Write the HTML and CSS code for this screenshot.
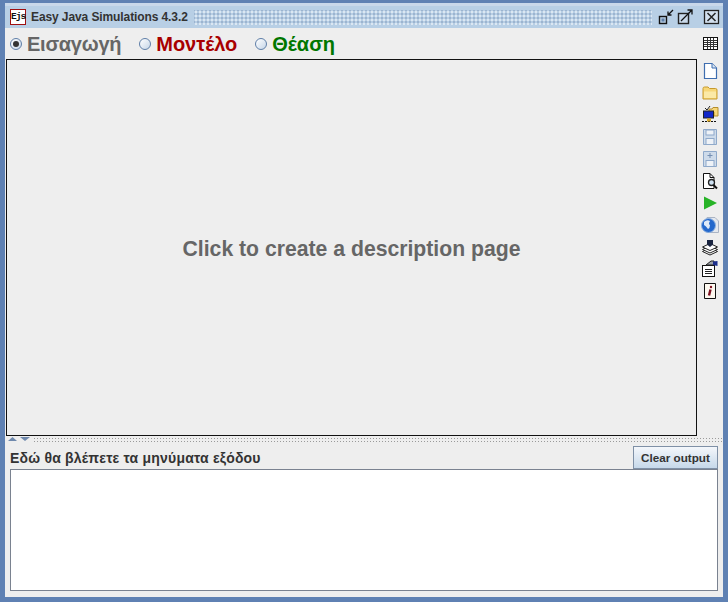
FILE: index.html
```html
<!DOCTYPE html>
<html lang="el">
<head>
<meta charset="utf-8">
<title>Easy Java Simulations</title>
<link rel="stylesheet" href="styles.css">
</head>
<body>
<div class="frame">
  <header class="titlebar">
    <span class="logo">Ejs</span>
    <span class="title">Easy Java Simulations 4.3.2</span>
    <span class="dots"></span>
    <span class="winbtn"><svg width="18" height="18" viewBox="0 0 18 18"><rect x="1.500" y="8.500" width="7" height="7" fill="#b8cfe5" stroke="#111" stroke-width="1.400"/><rect x="3.500" y="10.500" width="3" height="3" fill="#5f7fa8"/><path d="M15 2L10 7M10 3.500V7H13.500" fill="none" stroke="#111" stroke-width="1.300"/></svg></span>
    <span class="winbtn flush"><svg width="18" height="18" viewBox="0 0 18 18"><rect x="2.500" y="5.500" width="10" height="10" fill="#c9d9ea" stroke="#222" stroke-width="1.400"/><path d="M5 13L16 2M11.500 2H16V6.500" fill="none" stroke="#111" stroke-width="1.300"/></svg></span>
    <span class="winbtn close"><svg width="18" height="18" viewBox="0 0 18 18"><rect x="1.500" y="2.500" width="14" height="13" fill="#d3e0ee" stroke="#222" stroke-width="1.300"/><path d="M4.500 5L12.500 13M12.500 5L4.500 13" stroke="#222" stroke-width="1.500"/></svg></span>
  </header>
  <div class="tabs">
    <label class="tab grey"><span class="radio on"></span><span class="tight">Εισαγωγή</span></label>
    <label class="tab red"><span class="radio"></span>Μοντέλο</label>
    <label class="tab green"><span class="radio"></span>Θέαση</label>
    <svg class="grid-icon" width="15" height="13" viewBox="0 0 15 13"><rect x=".5" y=".5" width="14" height="12" fill="#fff" stroke="#111"/><path d="M1 3.500H14M1 5.500H14M1 7.500H14M1 9.500H14M4.500 1V12M7.500 1V12M10.500 1V12" stroke="#333"/></svg>
  </div>
  <div class="workspace">
    <main class="page">Click to create a description page</main>
    <nav class="tools">
      <svg width="16" height="18" viewBox="0 0 16 18"><path d="M2.500 1.500H10L14.500 6V16.500H2.500Z" fill="#fff" stroke="#3f6eb0" stroke-width="1.200"/><path d="M10 1.500V6H14.500" fill="#dbe6f3" stroke="#3f6eb0"/></svg>
      <svg width="16" height="18" viewBox="0 0 16 18"><path d="M1 4.500Q1 3 2.500 3H6L7.500 4.500H13.500Q15 4.500 15 6V15H1Z" fill="#f7d778" stroke="#c79a2c"/><path d="M2 7.500H14V14H2Z" fill="#fbe9a6"/></svg>
      <svg width="18" height="18" viewBox="0 0 18 18"><path d="M8 3H11L12 1.500H17V10H13V6H8Z" fill="#f7d778" stroke="#b58e2c"/><path d="M4 2L6 4L9 0" fill="none" stroke="#222"/><rect x="2.500" y="5" width="10" height="7" fill="#1226c8" stroke="#222"/><path d="M1 15.500H16" stroke="#111" stroke-dasharray="2 1"/><rect x="6" y="12.500" width="4" height="3" fill="#d8a828"/></svg>
      <svg class="faded" width="16" height="18" viewBox="0 0 16 18"><path d="M1.500 1.500H14.500V16.500H1.500Z" fill="#c9d8ea" stroke="#7f9dc4"/><rect x="4" y="2" width="8" height="5" fill="#eef3f9" stroke="#7f9dc4"/><rect x="4" y="10.500" width="8" height="6" fill="#eef3f9" stroke="#7f9dc4"/></svg>
      <svg class="faded" width="16" height="18" viewBox="0 0 16 18"><path d="M1.500 1.500H14.500V16.500H1.500Z" fill="#c9d8ea" stroke="#7f9dc4"/><path d="M8 3V8M5.500 5.500H10.500" stroke="#5f7fa8"/><rect x="4" y="10.500" width="8" height="6" fill="#eef3f9" stroke="#7f9dc4"/></svg>
      <svg width="18" height="18" viewBox="0 0 18 18"><path d="M2.500 1.500H9L13 5.500V16.500H2.500Z" fill="#fff" stroke="#111"/><path d="M9 1.500V5.500H13" fill="none" stroke="#111"/><circle cx="10.500" cy="10.500" r="3" fill="#cfe2f3" stroke="#222" stroke-width="1.300"/><path d="M12.500 13L16 16.500" stroke="#111" stroke-width="2"/></svg>
      <svg width="16" height="18" viewBox="0 0 16 18"><path d="M2 2.500L15 9L2 15.500Z" fill="#27b327"/></svg>
      <svg width="20" height="18" viewBox="0 0 20 18"><path d="M7 1.500H15L18.500 5V16.500H7Z" fill="#e4e8ee" stroke="#aab4c4"/><circle cx="8.500" cy="9.500" r="7" fill="#2468cc" stroke="#8fb2e0"/><path d="M4 6Q7 3 10 5Q8 8 10 9Q10 12 8 13Q6 10 4 9Z" fill="#dfeaf8"/></svg>
      <svg width="18" height="18" viewBox="0 0 18 18"><path d="M1.500 13.500L9 17L16.500 13.500L9 10Z" fill="#fff" stroke="#222"/><path d="M1.500 11.500L9 15L16.500 11.500L9 8Z" fill="#fff" stroke="#222"/><path d="M1.500 9L9 12.500L16.500 9L9 5.500Z" fill="#fff" stroke="#222"/><path d="M6 2H12V6.500L9 9L6 6.500Z" fill="#1a2440"/></svg>
      <svg width="18" height="18" viewBox="0 0 18 18"><rect x="1.500" y="5.500" width="12" height="11" fill="#fff" stroke="#111"/><path d="M4 9.500H11M4 11.500H11M4 13.500H11" stroke="#222"/><path d="M5 5L10 1H13V5Z" fill="#9aa0a8" stroke="#222"/><path d="M12 1.500L16.500 1V6L12 5Z" fill="#1c2f8c"/></svg>
      <svg width="16" height="18" viewBox="0 0 16 18"><path d="M2.500 1.500H13.500V16.500H2.500Z" fill="#fdf8ef" stroke="#111"/><circle cx="9" cy="5" r="1.200" fill="#7c1020"/><path d="M8.500 7.500L7 13.500" stroke="#7c1020" stroke-width="2.400"/></svg>
    </nav>
  </div>
  <div class="splitter">
    <svg width="28" height="6" viewBox="0 0 28 6"><path d="M3 5L7.500 1L12 5Z" fill="#6f89ad"/><path d="M15 1H25L20 5Z" fill="#6f89ad"/></svg>
    <span class="grip"></span>
  </div>
  <div class="output-head">
    <span class="output-label">Εδώ θα βλέπετε τα μηνύματα εξόδου</span>
    <button class="clear" type="button">Clear output</button>
  </div>
  <div class="output"></div>
</div>
</body>
</html>
```

FILE: styles.css
```css
* { box-sizing: border-box; }
html, body { margin: 0; padding: 0; }
body { width: 728px; height: 602px; overflow: hidden; }
.frame {
  width: 728px; height: 602px;
  display: flex; flex-direction: column;
  background: #eeeeee;
  border-style: solid;
  border-color: #5f81b3;
  border-width: 3px 5px 5px 5px;
  font-family: "Liberation Sans", Arial, sans-serif;
}
.titlebar {
  height: 25px; flex: none;
  display: flex; align-items: center;
  background: #b8cfe5;
  border-top: 3px solid #c9d8ea;
  padding: 0 2px 0 5px;
}
.logo {
  width: 16px; height: 16px; flex: none;
  background: #fff; border: 1px solid #a01010;
  font: bold 9.500px/14px "Liberation Mono", monospace;
  text-align: center; color: #111; letter-spacing: -1px;
}
.title { margin-left: 5px; font-size: 12px; font-weight: bold; color: #333333; white-space: nowrap; letter-spacing: -.1px; }
.dots {
  flex: 1; height: 15px; margin: 0 6px 0 6px;
  background-image: radial-gradient(#dce7f2 0.8px, transparent 0.9px), radial-gradient(#9db4cf 0.8px, transparent 0.9px);
  background-size: 4px 4px; background-position: 0 0, 2px 2px;
}
.winbtn { width: 18px; height: 18px; flex: none; }
.winbtn.close { margin-left: 9px; }
.tabs {
  height: 30px; flex: none;
  display: flex; align-items: center;
  padding: 2px 0 0 5px;
  font-size: 20px; font-weight: bold;
}
.tab { display: flex; align-items: center; white-space: nowrap; }
.tab.grey { color: #666666; margin-right: 18px; }
.tab.red { color: #a80000; margin-right: 18px; }
.tab.green { color: #007700; }
.tight { letter-spacing: -.25px; }
.radio {
  width: 12px; height: 12px; border-radius: 50%; margin-right: 5px;
  border: 1px solid #5f7fa8;
  background: linear-gradient(135deg, #ffffff, #c6d6e8);
  position: relative;
}
.radio.on::after {
  content: ""; position: absolute; left: 2px; top: 2px;
  width: 6px; height: 6px; border-radius: 50%; background: #333;
}
.grid-icon { margin-left: auto; margin-right: 5px; margin-top: -2px; }
.workspace { flex: 1; display: flex; min-height: 0; padding-left: 1px; margin-top: 1px; }
.page {
  width: 691px;
  border: 1px solid #111;
  display: flex; align-items: center; justify-content: center;
  font-size: 21.200px; font-weight: bold; color: #666666;
  padding-top: 2px;
}
.tools {
  flex: 1; display: flex; flex-direction: column; align-items: center;
  gap: 4px; padding-top: 3px;
}
.tools svg { display: block; flex: none; }
.faded { opacity: .85; }
.splitter { height: 10px; flex: none; display: flex; align-items: flex-start; }
.grip {
  flex: 1; height: 6px; margin-top: 1px;
  background-image: radial-gradient(#9a9a9a 0.6px, transparent 0.7px);
  background-size: 3px 3px;
}
.output-head {
  height: 23px; flex: none;
  display: flex; align-items: center; justify-content: space-between;
  padding: 0 5px 0 5px;
}
.output-label { font-size: 14px; font-weight: bold; color: #333333; letter-spacing: .21px; }
.clear {
  width: 85px; height: 23px;
  font: bold 11.700px "Liberation Sans", Arial, sans-serif;
  color: #333333;
  border: 1px solid #7f90a6;
  background: linear-gradient(#f4f7fb, #c6d8ea);
  padding: 0;
}
.output {
  height: 122px; flex: none;
  margin: 0 5px 6px 5px;
  background: #fff;
  border: 1px solid #7a8290;
}
```
